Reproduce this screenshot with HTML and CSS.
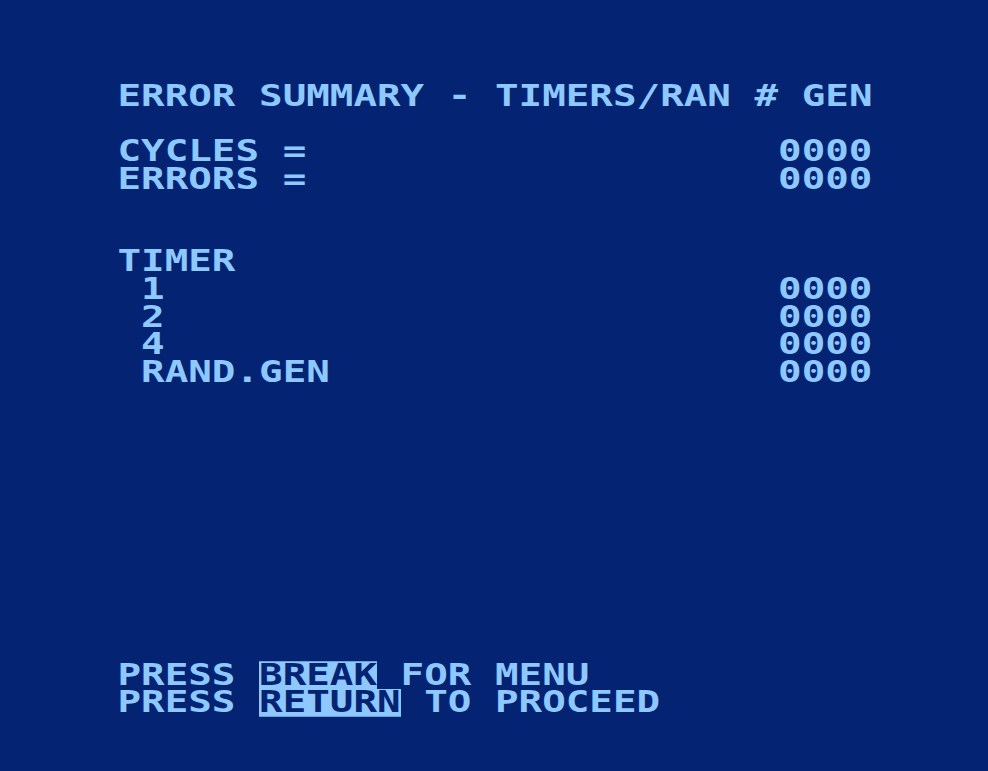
FILE: index.html
```html
<!DOCTYPE html>
<html lang="en">

<head>
  <meta charset="UTF-8">
  <meta name="viewport" content="width=device-width, initial-scale=1.0">
  <title>Error Summary</title>
  <link rel="stylesheet" href="styles.css">
</head>

<body>
  <div class="crt">
    <div class="screen">
      <div class="row">ERROR SUMMARY - TIMERS/RAN # GEN</div>
      <div class="row"></div>
      <div class="row"><span>CYCLES =</span><span>0000</span></div>
      <div class="row"><span>ERRORS =</span><span>0000</span></div>
      <div class="row"></div>
      <div class="row"></div>
      <div class="row">TIMER</div>
      <div class="row"><span class="sub">1</span><span>0000</span></div>
      <div class="row"><span class="sub">2</span><span>0000</span></div>
      <div class="row"><span class="sub">4</span><span>0000</span></div>
      <div class="row"><span class="sub">RAND.GEN</span><span>0000</span></div>

      <div class="footer">
        <div class="row">PRESS <span class="key">BREAK</span> FOR MENU</div>
        <div class="row">PRESS <span class="key">RETURN</span> TO PROCEED</div>
      </div>
    </div>
  </div>
</body>

</html>
```

FILE: styles.css
```css
body {
  margin: 0;
  background: #052373;
}

.crt {
  height: 771px;
  padding: 83px 0 0 117.5px;
  box-sizing: border-box;
  overflow: hidden;
}

/* 32 column text screen, glyphs squashed to the tall blocky look */
.screen {
  width: 32ch;
  font-family: "DejaVu Sans Mono", "Liberation Mono", monospace;
  font-weight: bold;
  font-size: 39.2px;
  color: #8dc8ff;
  transform: scaleY(0.75);
  transform-origin: top left;
}

.row {
  display: flex;
  justify-content: space-between;
  height: 36.73px;
  line-height: 36.73px;
  white-space: pre;
}

.sub {
  padding-left: 1ch;
}

.footer {
  margin-top: 367.3px;
}

.footer .row {
  justify-content: flex-start;
}

.key {
  background: #8dc8ff;
  color: #052373;
}
```
